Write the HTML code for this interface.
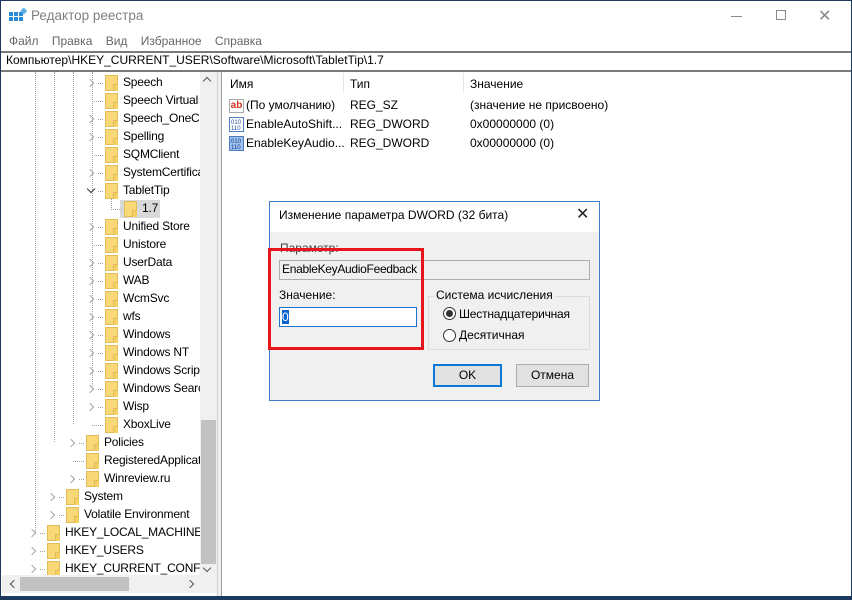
<!DOCTYPE html>
<html><head><meta charset="utf-8"><style>
*{margin:0;padding:0;box-sizing:border-box}
body{width:852px;height:600px;position:relative;overflow:hidden;background:#fff;font-family:"Segoe UI","Liberation Sans","DejaVu Sans",sans-serif;font-size:12px;color:#000}
.a{position:absolute;white-space:nowrap}
#tree .a{letter-spacing:-0.2px}
.fold{position:absolute;width:13px;height:16px;background:#f8d877;border:1px solid #e2bd57}
.fold:after{content:"";position:absolute;right:-1px;bottom:-1px;width:4px;height:6px;border-left:1px solid #e2bd57;border-top:1px solid #e2bd57;background:#f5cf62}
.arr{position:absolute;width:6px;height:6px;border-right:1.5px solid #a6a6a6;border-bottom:1.5px solid #a6a6a6;transform:rotate(-45deg)}
.dot{position:absolute;border-top:1px dotted #a0a0a0;height:0}
.vd{position:absolute;border-left:1px dotted #a0a0a0;width:0}
</style></head><body>
<div class="a" style="left:0;top:0;width:852px;height:600px;border:1px solid #1b3a5c;border-bottom:4px solid #1b3a5c"></div>
<svg class="a" style="left:9px;top:8px" width="18" height="16"><g fill="#2a8ad4"><rect x="0" y="4" width="4" height="4"/><rect x="5" y="4" width="4" height="4"/><rect x="0" y="9" width="4" height="4"/><rect x="5" y="9" width="4" height="4"/><rect x="10" y="9" width="4" height="4"/><rect x="10" y="4" width="4" height="4"/></g><rect x="12" y="0" width="5" height="5" fill="#60b0e8" transform="rotate(45 14 3)"/></svg>
<div class="a" style="left:31px;top:8px;font-size:13.5px;color:#808080">Редактор реестра</div>
<div class="a" style="left:731px;top:16px;width:11px;border-top:1px solid #888"></div>
<div class="a" style="left:776px;top:10px;width:10px;height:10px;border:1px solid #888"></div>
<div class="a" style="left:818px;top:6px;font-size:16px;color:#888">✕</div>
<div class="a" style="left:9px;top:34px;color:#666">Файл&nbsp;&nbsp;&nbsp; Правка&nbsp;&nbsp;&nbsp; Вид&nbsp;&nbsp;&nbsp; Избранное&nbsp;&nbsp;&nbsp; Справка</div>
<div class="a" style="left:1px;top:51px;width:850px;height:21px;border-top:2px solid #7a7a7a;border-bottom:2px solid #7a7a7a;background:#fff"></div>
<div class="a" style="left:6px;top:53px">Компьютер\HKEY_CURRENT_USER\Software\Microsoft\TabletTip\1.7</div>
<div class="a" style="left:217px;top:72px;width:5px;height:524px;background:#f0f0f0;border-left:1px solid #d0d0d0;border-right:1px solid #9a9a9a"></div>
<div class="a" style="left:200px;top:72px;width:17px;height:503px;background:#f0f0f0"></div>
<div class="a" style="left:201px;top:420px;width:15px;height:144px;background:#c2c2c2"></div>
<div class="a" style="left:204px;top:78px;width:6px;height:6px;border-left:1.5px solid #555;border-top:1.5px solid #555;transform:rotate(45deg)"></div>
<div class="a" style="left:204px;top:565px;width:6px;height:6px;border-right:1.5px solid #555;border-bottom:1.5px solid #555;transform:rotate(45deg)"></div>
<div class="a" style="left:2px;top:575px;width:215px;height:18px;background:#f0f0f0"></div>
<div class="a" style="left:20px;top:577px;width:109px;height:14px;background:#c2c2c2"></div>
<div class="a" style="left:11px;top:581px;width:6px;height:6px;border-left:1.5px solid #555;border-bottom:1.5px solid #555;transform:rotate(45deg)"></div>
<div class="a" style="left:187px;top:581px;width:6px;height:6px;border-right:1.5px solid #555;border-top:1.5px solid #555;transform:rotate(45deg)"></div>
<div id="tree" class="a" style="left:2px;top:72px;width:198px;height:503px;overflow:hidden"></div>
<div class="a" style="left:343px;top:73px;height:20px;border-left:1px solid #e5e5e5"></div>
<div class="a" style="left:463px;top:73px;height:20px;border-left:1px solid #e5e5e5"></div>
<div class="a" style="left:230px;top:77px">Имя</div>
<div class="a" style="left:350px;top:77px">Тип</div>
<div class="a" style="left:470px;top:77px">Значение</div>
<div class="a" style="left:229px;top:99px;width:15px;height:14px;border:1px solid #aaa;color:#d03020;font-size:10px;font-weight:bold;line-height:11px;text-align:center">ab</div>
<svg class="a" style="left:229px;top:117px" width="15" height="15"><rect x=".5" y=".5" width="14" height="14" fill="#fff" stroke="#4a7cc0"/><text x="2" y="7" font-size="6" fill="#2050a0" font-family="Liberation Sans">010</text><text x="2" y="13" font-size="6" fill="#2050a0" font-family="Liberation Sans">110</text></svg>
<svg class="a" style="left:229px;top:136px" width="15" height="15"><rect x=".5" y=".5" width="14" height="14" fill="#9cc0e8" stroke="#4a7cc0"/><text x="2" y="7" font-size="6" fill="#1a40a0" font-family="Liberation Sans">010</text><text x="2" y="13" font-size="6" fill="#1a40a0" font-family="Liberation Sans">110</text></svg>
<div class="a" style="left:246px;top:98px">(По умолчанию)</div><div class="a" style="left:350px;top:98px">REG_SZ</div><div class="a" style="left:470px;top:98px">(значение не присвоено)</div>
<div class="a" style="left:246px;top:117px">EnableAutoShift...</div><div class="a" style="left:350px;top:117px">REG_DWORD</div><div class="a" style="left:470px;top:117px">0x00000000 (0)</div>
<div class="a" style="left:246px;top:136px">EnableKeyAudio...</div><div class="a" style="left:350px;top:136px">REG_DWORD</div><div class="a" style="left:470px;top:136px">0x00000000 (0)</div>
<div class="a" style="left:269px;top:201px;width:331px;height:200px;background:#f0f0f0;border:1px solid #3f7fc8"></div>
<div class="a" style="left:270px;top:202px;width:329px;height:30px;background:#fff"></div>
<div class="a" style="left:279px;top:208px">Изменение параметра DWORD (32 бита)</div>
<div class="a" style="left:576px;top:204px;font-size:16px;color:#222">✕</div>
<div class="a" style="left:280px;top:241px;color:#444">Параметр:</div>
<div class="a" style="left:279px;top:260px;width:311px;height:20px;background:#f0f0f0;border:1px solid #adadad"></div>
<div class="a" style="left:282px;top:262px;letter-spacing:-.3px">EnableKeyAudioFeedback</div>
<div class="a" style="left:279px;top:288px">Значение:</div>
<div class="a" style="left:279px;top:307px;width:138px;height:20px;background:#fff;border:1px solid #1b72d0"></div>
<div class="a" style="left:282px;top:310px;width:7px;height:14px;background:#0a64d0;color:#fff;font-size:12px;line-height:14px">0</div>
<div class="a" style="left:428px;top:296px;width:162px;height:54px;border:1px solid #dcdcdc"></div>
<div class="a" style="left:434px;top:288px;background:#f0f0f0;padding:0 2px">Система исчисления</div>
<div class="a" style="left:443px;top:307px;width:13px;height:13px;border-radius:50%;border:1px solid #333;background:#fff"></div>
<div class="a" style="left:446px;top:310px;width:7px;height:7px;border-radius:50%;background:#333"></div>
<div class="a" style="left:459px;top:307px;letter-spacing:-.2px">Шестнадцатеричная</div>
<div class="a" style="left:443px;top:329px;width:13px;height:13px;border-radius:50%;border:1px solid #333;background:#fff"></div>
<div class="a" style="left:459px;top:328px">Десятичная</div>
<div class="a" style="left:433px;top:364px;width:69px;height:23px;border:2px solid #0a78d7;background:#e1e1e1;text-align:center;line-height:19px">OK</div>
<div class="a" style="left:516px;top:364px;width:73px;height:23px;border:1px solid #adadad;background:#e1e1e1;text-align:center;line-height:21px">Отмена</div>
<div class="a" style="left:268px;top:248px;width:156px;height:102px;border:3px solid #e8141c"></div>
<script>
var rows=[["Speech",4,1],["Speech Virtual",4,0],["Speech_OneCore",4,1],["Spelling",4,1],["SQMClient",4,0],["SystemCertificates",4,1],["TabletTip",4,2],["1.7",5,0],["Unified Store",4,1],["Unistore",4,0],["UserData",4,1],["WAB",4,1],["WcmSvc",4,1],["wfs",4,1],["Windows",4,1],["Windows NT",4,1],["Windows Script",4,1],["Windows Search",4,1],["Wisp",4,1],["XboxLive",4,0],["Policies",3,1],["RegisteredApplications",3,0],["Winreview.ru",3,1],["System",2,1],["Volatile Environment",2,1],["HKEY_LOCAL_MACHINE",1,1],["HKEY_USERS",1,1],["HKEY_CURRENT_CONFIG",1,1]];
var ix={1:44,2:63,3:83,4:102,5:121},h="";
h+='<div class="vd" style="left:33px;top:0;height:460px"></div>';
h+='<div class="vd" style="left:52px;top:0;height:370px"></div>';
h+='<div class="vd" style="left:71px;top:0;height:352px"></div>';
h+='<div class="vd" style="left:90px;top:0;height:316px"></div>';
h+='<div class="vd" style="left:109px;top:127px;height:11px"></div>';
rows.forEach(function(r,i){var y=11+i*18,x=ix[r[1]];
if(r[0]=="1.7")h+='<div class="a" style="left:'+(x-3)+'px;top:'+(y-9)+'px;width:40px;height:18px;background:#d9d9d9"></div>';
if(r[2]==1)h+='<div class="arr" style="left:'+(x-17)+'px;top:'+(y-3)+'px"></div>';
if(r[2]==2)h+='<div class="arr" style="left:'+(x-16)+'px;top:'+(y-5)+'px;transform:rotate(45deg);border-color:#333"></div>';
h+='<div class="dot" style="left:'+(x-(r[2]?6:12))+'px;top:'+y+'px;width:'+(r[2]?5:11)+'px"></div>';
h+='<div class="fold" style="left:'+(x+1)+'px;top:'+(y-8)+'px"></div>';
h+='<div class="a" style="left:'+(x+19)+'px;top:'+(y-8)+'px">'+r[0]+'</div>';});
document.getElementById("tree").innerHTML=h;
</script>
</body></html>
